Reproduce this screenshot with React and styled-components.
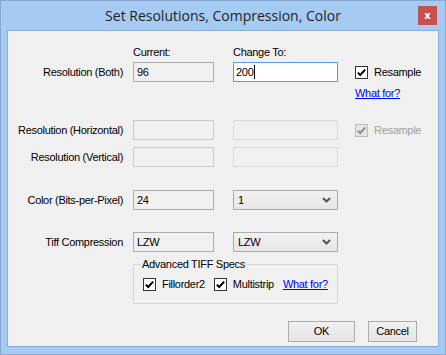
import React from "react";
import styled, { createGlobalStyle, css } from "styled-components";

const Global = createGlobalStyle`
  html, body { margin: 0; padding: 0; background: #a5cbf3; }
  body { font-family: "Liberation Sans", Arial, sans-serif; }
`;

const Window = styled.div`
  width: 446px;
  height: 355px;
  box-sizing: border-box;
  background: #a6cbf3;
  border: 1px solid #86a8d0;
  display: flex;
  flex-direction: column;
`;

const TitleBar = styled.div`
  height: 29px;
  display: grid;
  grid-template-columns: 1fr auto 1fr;
  align-items: start;
`;

const Title = styled.div`
  grid-column: 2;
  margin-top: 5px;
  font-family: "Open Sans", "Noto Sans", sans-serif;
  font-size: 14px;
  line-height: 20px;
  color: #1e1e1e;
  white-space: nowrap;
`;

const CloseButton = styled.div`
  grid-column: 3;
  justify-self: end;
  margin: 5px 8px 0 0;
  width: 19px;
  height: 19px;
  background: #c75050;
  color: #fff;
  display: flex;
  align-items: center;
  justify-content: center;
  font-family: "DejaVu Sans", sans-serif;
  font-weight: bold;
  font-size: 10px;
  line-height: 1;
`;

const Body = styled.div`
  flex: 1;
  padding: 0 6px 7px 6px;
  display: flex;
`;

const Client = styled.div`
  flex: 1;
  background: #f0f0f0;
  border: 1px solid #8aadd6;
  display: flex;
  flex-direction: column;
  font-size: 11px;
  line-height: 13px;
  letter-spacing: -0.3px;
  color: #000;
`;

const Row = styled.div`
  display: grid;
  grid-template-columns: 125px 100px 122px 1fr;
  align-items: center;
  margin-top: ${(p) => p.$top}px;
  min-height: ${(p) => (p.$field ? 20 : 13)}px;
`;

const Label = styled.div`
  grid-column: 1;
  text-align: right;
  padding-right: 10px;
  white-space: nowrap;
`;

const Caption = styled.div`
  grid-column: ${(p) => p.$col};
`;

const TextBox = styled.div`
  box-sizing: border-box;
  height: 20px;
  width: ${(p) => p.$w}px;
  padding: 0 3px;
  display: flex;
  align-items: center;
  white-space: nowrap;
  ${(p) =>
    p.$variant === "focus" &&
    css`
      background: #fff;
      border: 1px solid #569de5;
      padding-left: 2px;
    `}
  ${(p) =>
    p.$variant === "readonly" &&
    css`
      background: #f0f0f0;
      border: 1px solid #abadb3;
    `}
  ${(p) =>
    p.$variant === "disabled" &&
    css`
      background: #f0f0f0;
      border: 1px solid ${p.$light ? "#dadada" : "#cacaca"};
    `}
`;

const Caret = styled.span`
  display: inline-block;
  width: 1px;
  height: 14px;
  margin-left: 1px;
  background: #000;
`;

const Select = styled.div`
  box-sizing: border-box;
  width: 105px;
  height: 20px;
  border: 1px solid #acacac;
  background: linear-gradient(#f2f2f2, #e6e6e6);
  display: flex;
  align-items: center;
  justify-content: space-between;
  padding: 0 6px 0 4px;
`;

const CheckWrap = styled.label`
  display: inline-flex;
  align-items: center;
  gap: 6px;
  white-space: nowrap;
  color: ${(p) => (p.$disabled ? "#a0a0a0" : "#000")};
`;

const Box = styled.span`
  box-sizing: border-box;
  width: 13px;
  height: 13px;
  border: 1px solid ${(p) => (p.$disabled ? "#bcbcbc" : "#333")};
  background: ${(p) => (p.$disabled ? "#e6e6e6" : "#fff")};
  display: flex;
  align-items: center;
  justify-content: center;
`;

const Link = styled.a`
  color: #0000ff;
  text-decoration: underline;
  white-space: nowrap;
  cursor: pointer;
`;

const Group = styled.fieldset`
  grid-column: 2 / 4;
  justify-self: start;
  box-sizing: border-box;
  width: 205px;
  margin: 0;
  padding: 7px 0 12px 9px;
  border: 1px solid #d8d8d8;
  min-inline-size: 0;
`;

const Legend = styled.legend`
  padding: 0 1px;
  margin-left: -2px;
  font-size: 11px;
  line-height: 13px;
`;

const GroupRow = styled.div`
  display: flex;
  align-items: center;
  gap: 9px;
`;

const Buttons = styled.div`
  display: flex;
  justify-content: flex-end;
  gap: 13px;
  padding-right: 21px;
  margin-top: ${(p) => p.$top}px;
`;

const Button = styled.div`
  box-sizing: border-box;
  width: ${(p) => p.$w}px;
  height: 21px;
  border: 1px solid #acacac;
  background: linear-gradient(#f0f0f0, #e5e5e5);
  display: flex;
  align-items: center;
  justify-content: center;
`;

const Check = ({ checked = true, disabled, children }) => (
  <CheckWrap $disabled={disabled}>
    <Box $disabled={disabled}>
      {checked && (
        <svg width="11" height="11" viewBox="0 0 11 11">
          <path
            d="M1.8 5.6 L4.2 8 L9.2 2.6"
            fill="none"
            stroke={disabled ? "#8a8a8a" : "#000"}
            strokeWidth="2"
          />
        </svg>
      )}
    </Box>
    {children}
  </CheckWrap>
);

const Chevron = () => (
  <svg width="9" height="6" viewBox="0 0 9 6">
    <path d="M1 1 L4.5 4.5 L8 1" fill="none" stroke="#555" strokeWidth="2" />
  </svg>
);

export default function App() {
  return (
    <>
      <Global />
      <Window>
        <TitleBar>
          <Title>Set Resolutions, Compression, Color</Title>
          <CloseButton>x</CloseButton>
        </TitleBar>
        <Body>
          <Client>
            <Row $top={15}>
              <Caption $col={2}>Current:</Caption>
              <Caption $col={3}>Change To:</Caption>
            </Row>
            <Row $top={3} $field>
              <Label>Resolution (Both)</Label>
              <TextBox $w={81} $variant="readonly">96</TextBox>
              <TextBox $w={105} $variant="focus">
                200
                <Caret />
              </TextBox>
              <Check>Resample</Check>
            </Row>
            <Row $top={5}>
              <Caption $col={4}>
                <Link>What for?</Link>
              </Caption>
            </Row>
            <Row $top={20} $field>
              <Label>Resolution (Horizontal)</Label>
              <TextBox $w={81} $variant="disabled" />
              <TextBox $w={105} $variant="disabled" $light />
              <Check disabled>Resample</Check>
            </Row>
            <Row $top={7} $field>
              <Label>Resolution (Vertical)</Label>
              <TextBox $w={81} $variant="disabled" />
              <TextBox $w={105} $variant="disabled" $light />
            </Row>
            <Row $top={23} $field>
              <Label>Color (Bits-per-Pixel)</Label>
              <TextBox $w={81} $variant="readonly">24</TextBox>
              <Select>
                <span>1</span>
                <Chevron />
              </Select>
            </Row>
            <Row $top={22} $field>
              <Label>Tiff Compression</Label>
              <TextBox $w={81} $variant="readonly">LZW</TextBox>
              <Select>
                <span>LZW</span>
                <Chevron />
              </Select>
            </Row>
            <Row $top={6}>
              <Group>
                <Legend>Advanced TIFF Specs</Legend>
                <GroupRow>
                  <Check>Fillorder2</Check>
                  <Check>Multistrip</Check>
                  <Link>What for?</Link>
                </GroupRow>
              </Group>
            </Row>
            <Buttons $top={17}>
              <Button $w={67}>OK</Button>
              <Button $w={49}>Cancel</Button>
            </Buttons>
          </Client>
        </Body>
      </Window>
    </>
  );
}
